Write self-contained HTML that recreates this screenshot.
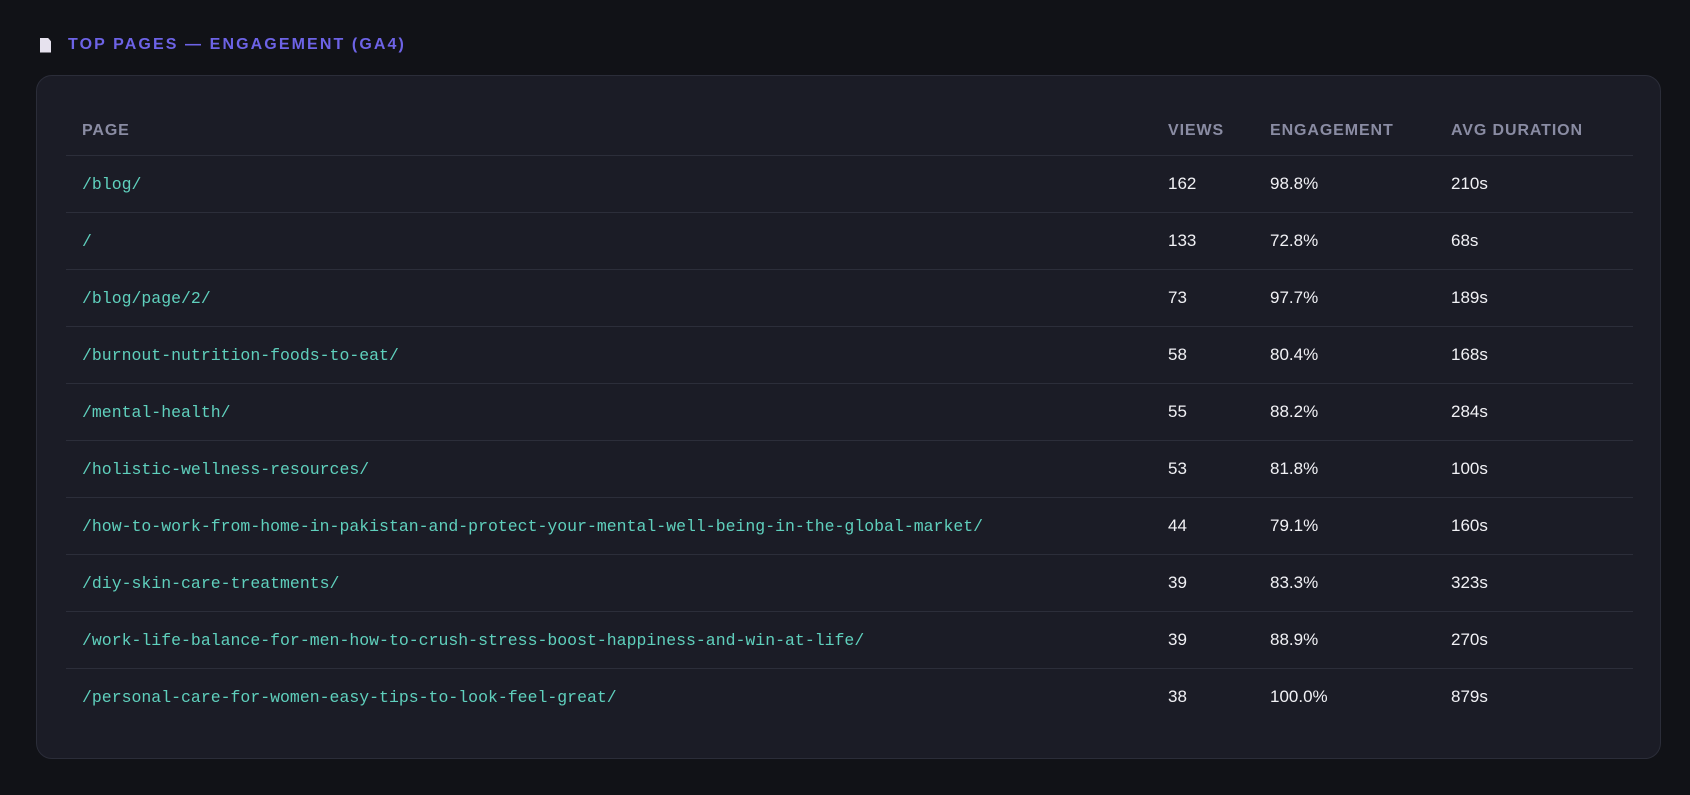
<!DOCTYPE html>
<html><head><meta charset="utf-8"><style>
html,body{margin:0;padding:0;background:#111217;width:1690px;height:795px;overflow:hidden;font-family:"Liberation Sans","DejaVu Sans",sans-serif}
.title{position:absolute;left:40px;top:36px;font-size:16px;font-weight:bold;letter-spacing:2.1px;color:#6d63e6;display:flex;align-items:center}
.title .ic{width:11px;height:15px;background:#e6e2ee;margin-right:17px;position:relative;clip-path:polygon(0 0,70% 0,100% 25%,100% 100%,0 100%)}
.card{position:absolute;left:36px;top:75px;height:684px;box-sizing:border-box;width:1625px;background:#1b1c26;border:1px solid #2b2d39;border-radius:16px}
table{position:absolute;left:29px;top:30px;width:1567px;border-collapse:collapse}
th{text-align:left;font-size:16px;font-weight:bold;color:#8a8ca3;letter-spacing:0.9px;height:49px;padding:0 0 0 16px;border-bottom:1px solid #2c2e3a}
td{height:56px;padding:0 0 0 16px;border-bottom:1px solid #2c2e3a;color:#f1f1f5;font-size:17px}
tr:last-child td{border-bottom:none}
td.p{font-family:"Liberation Mono","DejaVu Sans Mono",monospace;color:#5fd0bd;font-size:16.5px}
</style></head><body>
<div class="title"><span class="ic"></span>TOP PAGES — ENGAGEMENT (GA4)</div>
<div class="card"><table>
<colgroup><col style="width:1086px"><col style="width:102px"><col style="width:181px"><col></colgroup>
<tr><th>PAGE</th><th>VIEWS</th><th>ENGAGEMENT</th><th>AVG DURATION</th></tr>
<tr><td class="p">/blog/</td><td>162</td><td>98.8%</td><td>210s</td></tr>
<tr><td class="p">/</td><td>133</td><td>72.8%</td><td>68s</td></tr>
<tr><td class="p">/blog/page/2/</td><td>73</td><td>97.7%</td><td>189s</td></tr>
<tr><td class="p">/burnout-nutrition-foods-to-eat/</td><td>58</td><td>80.4%</td><td>168s</td></tr>
<tr><td class="p">/mental-health/</td><td>55</td><td>88.2%</td><td>284s</td></tr>
<tr><td class="p">/holistic-wellness-resources/</td><td>53</td><td>81.8%</td><td>100s</td></tr>
<tr><td class="p">/how-to-work-from-home-in-pakistan-and-protect-your-mental-well-being-in-the-global-market/</td><td>44</td><td>79.1%</td><td>160s</td></tr>
<tr><td class="p">/diy-skin-care-treatments/</td><td>39</td><td>83.3%</td><td>323s</td></tr>
<tr><td class="p">/work-life-balance-for-men-how-to-crush-stress-boost-happiness-and-win-at-life/</td><td>39</td><td>88.9%</td><td>270s</td></tr>
<tr><td class="p">/personal-care-for-women-easy-tips-to-look-feel-great/</td><td>38</td><td>100.0%</td><td>879s</td></tr>
</table></div>
</body></html>
